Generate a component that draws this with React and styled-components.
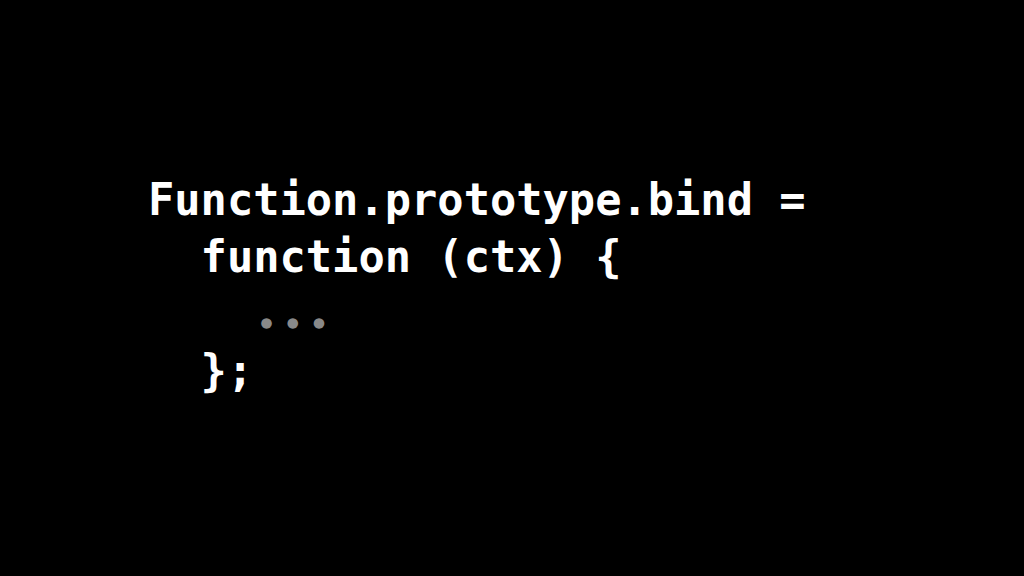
import React from "react";
import styled, { createGlobalStyle } from "styled-components";

const Global = createGlobalStyle`
  html, body { margin: 0; padding: 0; background: #000; }
  #root { width: 1024px; height: 576px; }
`;

const Slide = styled.div`
  width: 1024px;
  height: 576px;
  background: #000;
  display: flex;
  flex-direction: column;
  justify-content: flex-start;
  padding: 171px 0 0 148px;
  box-sizing: border-box;
`;

const Code = styled.pre`
  margin: 0;
  font-family: "DejaVu Sans Mono", "Liberation Mono", monospace;
  font-weight: bold;
  font-size: 43.7px;
  line-height: 57px;
  color: #fff;
  white-space: pre;
`;

const Line = styled.div`
  padding-left: ${(p) => p.$indent * 0.602}em;
`;

const Muted = styled.span`
  color: #898989;
`;

const Dot = styled.span`
  display: inline-block;
  width: 26.3px;
  text-align: center;
  font-family: Lato, "DejaVu Sans Mono", sans-serif;
  font-weight: 900;
  font-size: 44px;
  line-height: 0;
  vertical-align: 2px;
  -webkit-text-stroke: 3.4px #898989;
`;

export default function App() {
  return (
    <>
      <Global />
      <Slide>
        <Code>
          <Line $indent={0}>Function.prototype.bind =</Line>
          <Line $indent={2}>function (ctx) {"{"}</Line>
          <Line $indent={4}>
            <Muted>
              <Dot>.</Dot>
              <Dot>.</Dot>
              <Dot>.</Dot>
            </Muted>
          </Line>
          <Line $indent={2}>{"};"}</Line>
        </Code>
      </Slide>
    </>
  );
}
